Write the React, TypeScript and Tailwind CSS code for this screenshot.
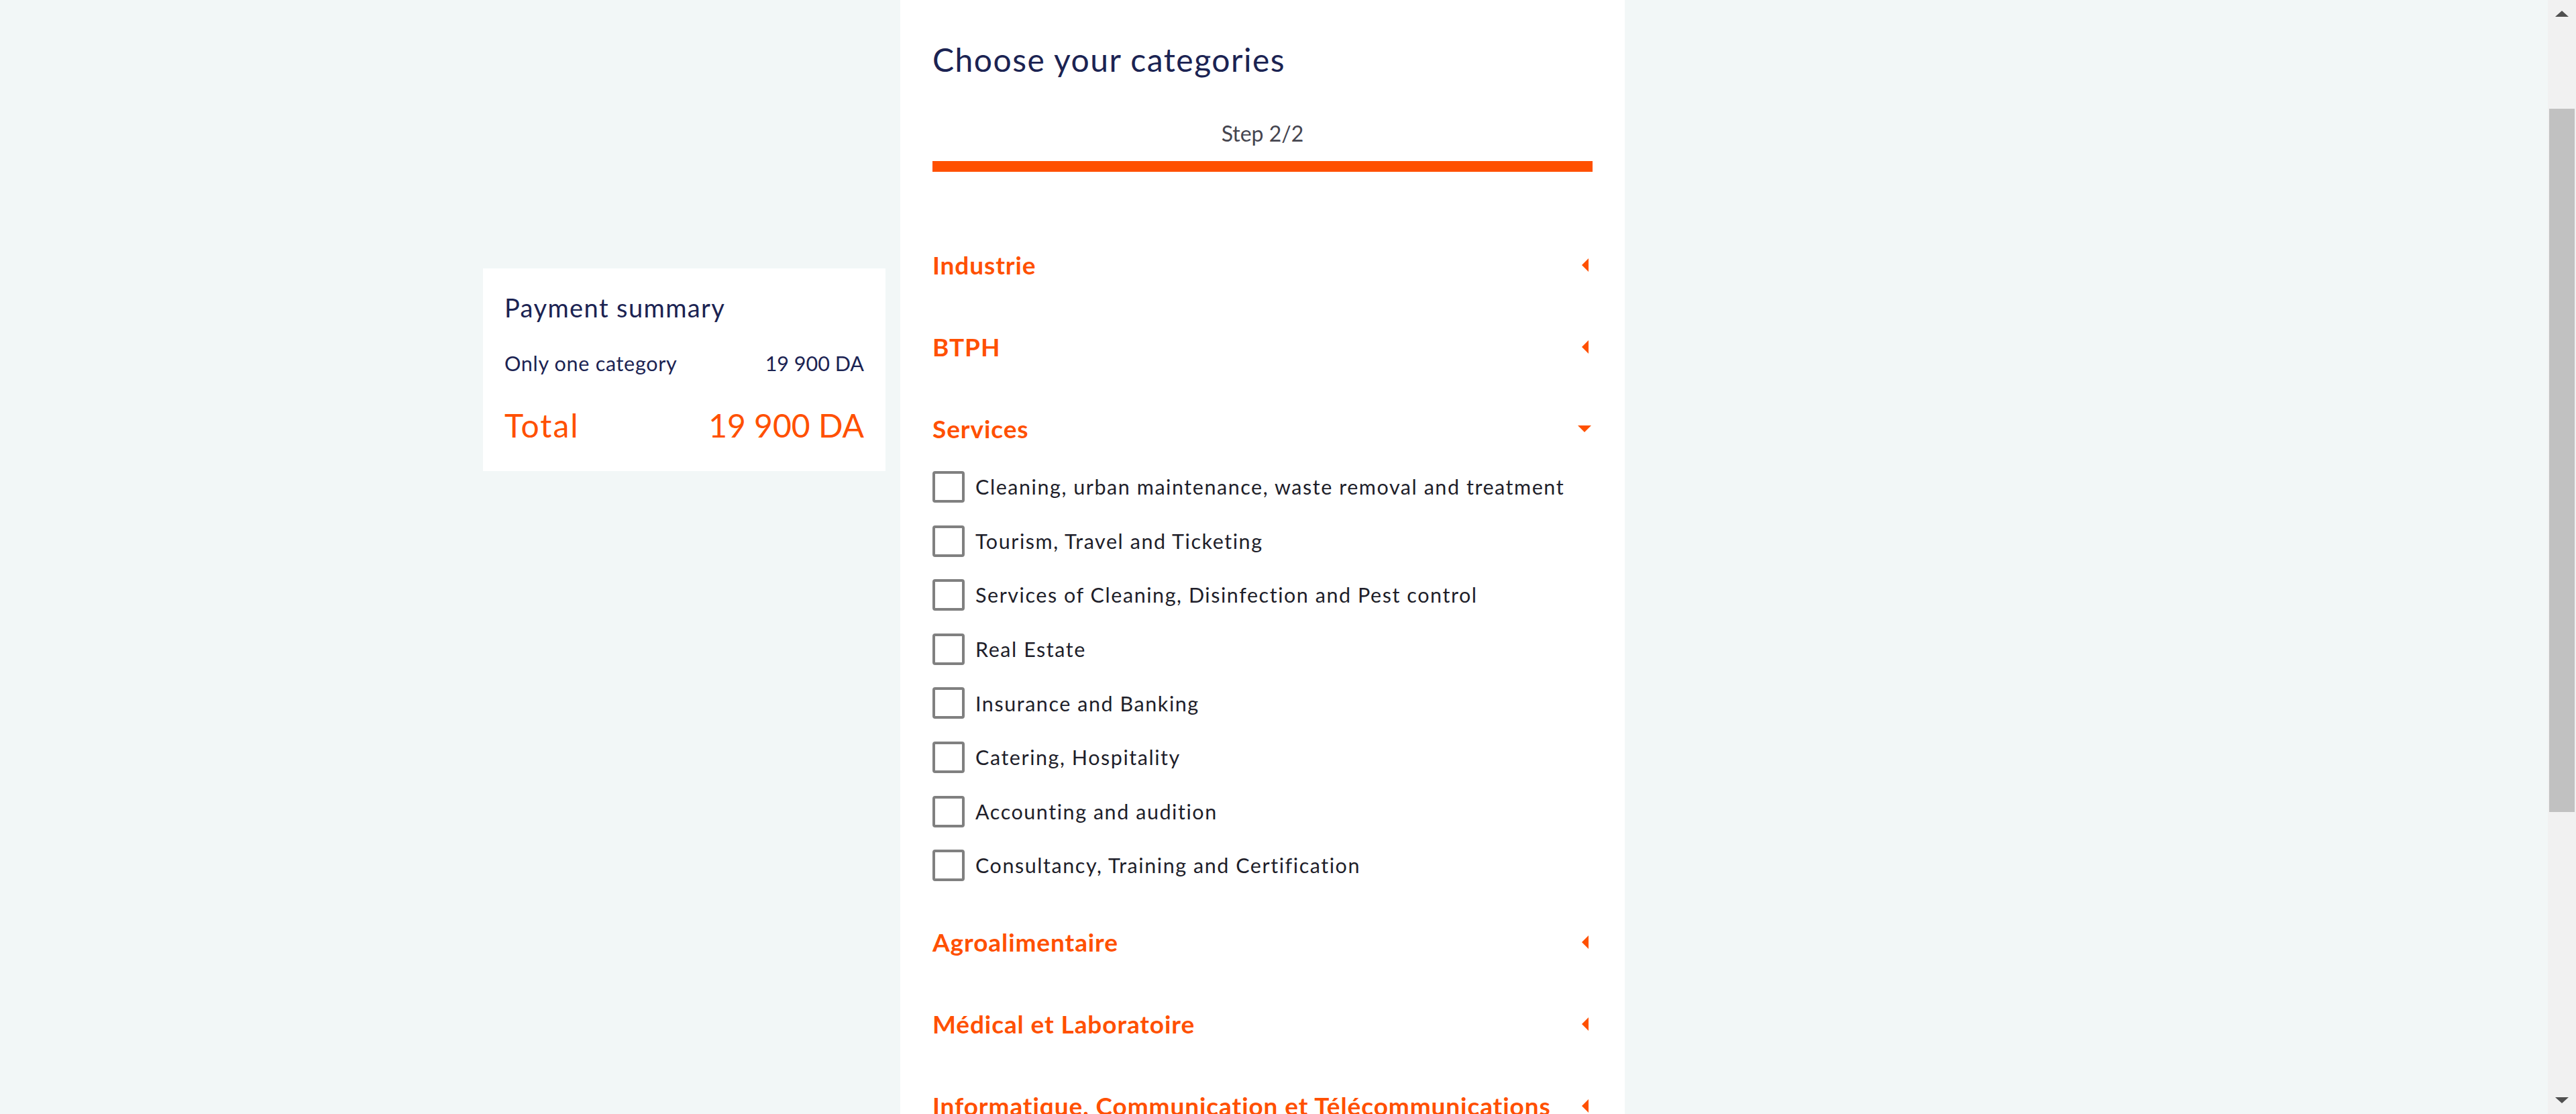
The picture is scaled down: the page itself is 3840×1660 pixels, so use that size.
import React from "react";

const services = [
  "Cleaning, urban maintenance, waste removal and treatment",
  "Tourism, Travel and Ticketing",
  "Services of Cleaning, Disinfection and Pest control",
  "Real Estate",
  "Insurance and Banking",
  "Catering, Hospitality",
  "Accounting and audition",
  "Consultancy, Training and Certification",
];

function CaretLeft() {
  return (
    <svg width="24" height="22" viewBox="0 0 24 22" className="block">
      <polygon points="18,1 18,21 8,11" fill="#ff5000" />
    </svg>
  );
}

function CaretDown() {
  return (
    <svg width="24" height="12" viewBox="0 0 24 12" className="block">
      <polygon points="2,1 22,1 12,11" fill="#ff5000" />
    </svg>
  );
}

function Header({ label, open }: { label: string; open?: boolean }) {
  return (
    <div className="h-[122px] shrink-0 flex items-center justify-between">
      <span className="text-[37px] leading-[37px] font-bold tracking-[0.9px] text-[#ff5000]">{label}</span>
      <span className="w-[24px] flex justify-center">{open ? <CaretDown /> : <CaretLeft />}</span>
    </div>
  );
}

export default function App() {
  return (
    <div
      className="w-full h-[1660px] flex overflow-hidden bg-[#f2f7f7]"
      style={{ fontFamily: "Lato, 'Open Sans', sans-serif" }}
    >
      <div className="flex-1 flex items-start pl-[720px] gap-[22px] min-w-0">
        {/* Payment summary */}
        <div className="mt-[400px] w-[600px] shrink-0 bg-white px-[32px] pt-[39.3px] pb-[43.6px]">
          <div className="text-[38px] leading-[38px] tracking-[1.4px] text-[#1b2352]">Payment summary</div>
          <div className="mt-[48.7px] flex justify-between text-[30.5px] leading-[30.5px] text-[#1b2352]">
            <span className="tracking-[0.7px]">Only one category</span>
            <span>19 900 DA</span>
          </div>
          <div className="mt-[53.9px] flex justify-between text-[48px] leading-[48px] text-[#ff5000]">
            <span className="tracking-[2px]">Total</span>
            <span>19 900 DA</span>
          </div>
        </div>

        {/* Main column */}
        <div className="w-[1080px] shrink-0 h-[1660px] bg-white px-[48px] pt-[65.4px]">
          <h1 className="text-[48px] leading-[48px] tracking-[1.5px] text-[#1b2352]">Choose your categories</h1>
          <div className="mt-[69.2px] text-center text-[32px] leading-[32px] text-[#45454f]">Step 2/2</div>
          <div className="mt-[25.4px] h-[16px] bg-[#ff5000]" />

          <div className="mt-[77.7px]">
            <Header label="Industrie" />
            <Header label="BTPH" />
            <Header label="Services" open />
            <div className="flex flex-col pt-[2.3px] gap-[33.6px]">
              {services.map((s) => (
                <label key={s} className="h-[47px] flex items-center gap-[16px]">
                  <span className="w-[48px] h-[47px] shrink-0 border-[4px] border-[#808080] rounded-[4px] bg-white" />
                  <span className="text-[30.5px] leading-[30.5px] tracking-[1.55px] text-[#1e1e2a]">{s}</span>
                </label>
              ))}
            </div>
            <div className="mt-[29.5px]">
              <Header label="Agroalimentaire" />
              <Header label="Médical et Laboratoire" />
              <Header label="Informatique, Communication et Télécommunications" />
            </div>
          </div>
        </div>
      </div>

      {/* Scrollbar */}
      <div className="w-[42px] h-full bg-[#f1f1f1] flex flex-col items-center shrink-0">
        <div className="h-[42px] w-full flex items-center justify-center">
          <svg width="20" height="10" viewBox="0 0 20 10">
            <polygon points="0,9 20,9 10,0" fill="#505050" />
          </svg>
        </div>
        <div className="mt-[120px] w-[38px] h-[1048px] bg-[#c1c1c1]" />
        <div className="flex-1" />
        <div className="h-[42px] w-full flex items-center justify-center">
          <svg width="20" height="10" viewBox="0 0 20 10">
            <polygon points="0,1 20,1 10,10" fill="#505050" />
          </svg>
        </div>
      </div>
    </div>
  );
}
